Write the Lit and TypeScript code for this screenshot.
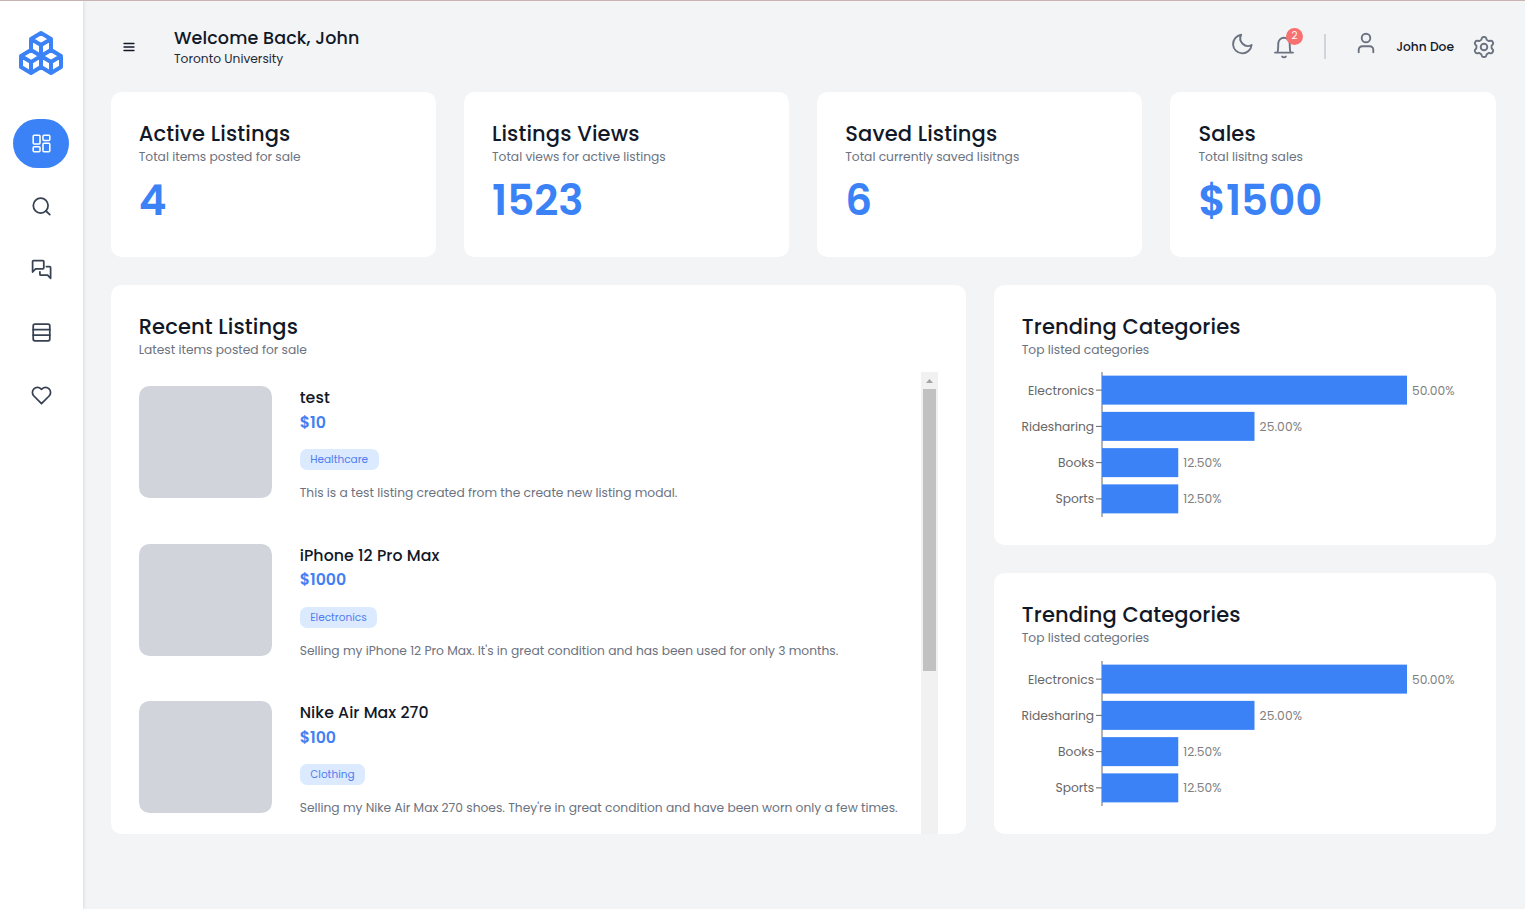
import { LitElement, html, css, svg } from "lit";
import { customElement, property } from "lit/decorators.js";

/* Six-toothed gear outline around (13, 13). */
const GEAR =
  Array.from({ length: 120 }, (_, i) => {
    const a = (i / 120) * Math.PI * 2;
    const r = 8.8 + (1.25 * Math.tanh(1.8 * Math.cos(6 * a))) / Math.tanh(1.8);
    return `${i ? "L" : "M"}${(13 + r * Math.sin(a)).toFixed(2)} ${(13 - r * Math.cos(a)).toFixed(2)}`;
  }).join("") + "z";

const ICONS: Record<string, { box: string; size: number; width: number; body: unknown }> = {
  logo: {
    box: "0 0 24 24", size: 48, width: 2,
    body: svg`<path d="M7 16.5l-5-3l5-3l5 3v5.5l-5 3zM2 13.5v5.5l5 3M7 16.545l5-3.03M17 16.5l-5-3l5-3l5 3v5.5l-5 3zM12 19l5 3M17 16.5l5-3M12 13.5v-5.5l-5-3l5-3l5 3v5.5M7 5.03v5.455M12 8l5-3"/>`,
  },
  dashboard: {
    box: "0 0 21 21", size: 21, width: 1.55,
    body: svg`<rect x="2.2" y="2.2" width="6.8" height="8.8" rx="1"/><rect x="12" y="2.2" width="6.8" height="5.2" rx="1"/><rect x="2.2" y="13.8" width="6.8" height="5" rx="1"/><rect x="12" y="10.2" width="6.8" height="8.6" rx="1"/>`,
  },
  search: {
    box: "0 0 21 21", size: 21, width: 1.75,
    body: svg`<circle cx="9.7" cy="9.6" r="7.4"/><path d="M15 15l3.8 3.6"/>`,
  },
  chat: {
    box: "0 0 21 21", size: 21, width: 1.75,
    body: svg`<path d="M1.6 13V2.6a1 1 0 0 1 1-1h9.2a1 1 0 0 1 1 1v6.2a1 1 0 0 1-1 1H4.6zM15.4 7.5h3.2a1 1 0 0 1 1 1v10.8l-3-3.1H9.9a1 1 0 0 1-1-1v-2.4"/>`,
  },
  table: {
    box: "0 0 21 21", size: 21, width: 1.75,
    body: svg`<rect x="2.2" y="2.2" width="16.6" height="16.6" rx="1.7"/><path d="M2.2 7.7h16.6M2.2 13.2h16.6"/>`,
  },
  heart: {
    box: "0 0 21 21", size: 21, width: 1.75,
    body: svg`<path d="M10.5 18.7L2.9 11a5 5 0 0 1 0-7.1 5 5 0 0 1 7.1 0l.5.5.5-.5a5 5 0 0 1 7.1 7.1z"/>`,
  },
  menu: {
    box: "0 0 14 14", size: 14, width: 1.3,
    body: svg`<path d="M2 3.5h10M2 7h10M2 10.5h10"/>`,
  },
  moon: {
    box: "0 0 24 24", size: 24, width: 1.9,
    body: svg`<path d="M11.2 2.8A9.3 9.3 0 1 0 21.6 13 7.6 7.6 0 0 1 11.2 2.8z"/>`,
  },
  bell: {
    box: "0 0 24 24", size: 24, width: 1.9,
    body: svg`<path d="M3 17.6h18M5.4 17.4C6.4 15 6.1 12 6.3 8.4a5.7 5.7 0 0 1 11.4 0C17.9 12 17.6 15 18.6 17.4M10.2 21.6c.8 1 2.8 1 3.6 0"/>`,
  },
  person: {
    box: "0 0 24 24", size: 24, width: 1.9,
    body: svg`<circle cx="12" cy="7" r="4.3"/><path d="M4.7 21.2v-2.4a3.6 3.6 0 0 1 3.6-3.6h7.4a3.6 3.6 0 0 1 3.6 3.6v2.4"/>`,
  },
  gear: {
    box: "0 0 26 26", size: 26, width: 1.9,
    body: svg`<path d=${GEAR}/><circle cx="13" cy="13" r="3.3"/>`,
  },
};

@customElement("line-icon")
class LineIcon extends LitElement {
  @property() name = "search";
  static styles = css`
    :host { display: block; }
    svg { display: block; fill: none; stroke: currentColor; stroke-linecap: round; stroke-linejoin: round; }
  `;
  render() {
    const i = ICONS[this.name];
    return html`<svg width=${i.size} height=${i.size} viewBox=${i.box} stroke-width=${i.width}>${i.body}</svg>`;
  }
}

@customElement("bar-chart")
class BarChart extends LitElement {
  static styles = css`
    :host { display: block; height: 146px; }
    svg { display: block; overflow: visible; }
    text { font: 400 12.25px Poppins, Inter, sans-serif; fill: #666; letter-spacing: -0.1px; }
    .value { fill: #808080; letter-spacing: -0.3px; }
    .axis { stroke: #666; stroke-width: 1; }
    .bar { fill: #3b82f6; }
  `;
  rows = [
    { name: "Electronics", pct: 50, nw: 66, vw: 42.2 },
    { name: "Ridesharing", pct: 25, nw: 72.5, vw: 42.2 },
    { name: "Books", pct: 12.5, nw: 36, vw: 38 },
    { name: "Sports", pct: 12.5, nw: 38.5, vw: 38 },
  ];
  render() {
    return html`<svg width="446" height="146">
      <path class="axis" d="M80 0v145" />
      ${this.rows.map((r, i) => {
        const y = 18.125 + i * 36.25;
        const base = 23 + i * 36;
        const w = r.pct * 6.1;
        return svg`
          <path class="axis" d="M74 ${y}h6"/>
          <rect class="bar" x="80" y=${y - 14.5} width=${w} height="29"/>
          <text x="72" y=${base} text-anchor="end" textLength=${r.nw}>${r.name}</text>
          <text class="value" x=${85 + w} y=${base} textLength=${r.vw}>${r.pct.toFixed(2)}%</text>`;
      })}
    </svg>`;
  }
}

@customElement("app-root")
class AppRoot extends LitElement {
  static styles = css`
    :host {
      display: flex; box-sizing: border-box; height: 909px; overflow: hidden;
      border-top: 1px solid #c8b4b0; background: #f3f4f6; color: #111827;
      font: 400 12.25px/17.5px Poppins, Inter, sans-serif;
    }
    * { box-sizing: border-box; }
    h1, h2, h3, p { margin: 0; white-space: nowrap; }
    nav {
      width: 83px; flex: none; background: #fff; color: #374151; box-shadow: 1px 0 3px rgba(0,0,0,.1);
      display: flex; flex-direction: column; align-items: center; padding-top: 28px;
    }
    .logo { color: #3b82f6; margin: 0 1px 42px 0; }
    .nav-item { width: 56px; height: 49px; margin: 0 1px 14px 0; border-radius: 24.5px; display: grid; place-items: center; }
    .active { background: #3b82f6; color: #fff; }
    main { flex: 1; min-width: 0; padding: 0 29.3px 0 27.7px; display: flex; flex-direction: column; }
    header { height: 91px; display: flex; align-items: center; color: #6b7280; margin: 0 -1.3px 0 .3px; }
    .menu { color: #111827; margin-left: 11px; }
    .welcome { margin-left: 38px; flex: 1; color: #111827; }
    .welcome h1 { font-size: 17.5px; line-height: 24px; font-weight: 500; letter-spacing: .12px; }
    .welcome p { line-height: 18px; color: #1f2937; }
    .moon { margin: -5px 18px 0 0; }
    .bell { position: relative; margin-right: 28px; }
    .badge {
      position: absolute; left: 14px; top: -7px; width: 17px; height: 17px; border-radius: 50%;
      background: #f87171; color: #fff; font-size: 10.5px; line-height: 16px; text-align: center;
    }
    .divider { width: 2px; height: 25px; background: #d1d5db; margin-right: 28px; }
    .person { margin: -7px 18px 0 0; }
    .user { color: #111827; font-weight: 500; margin-right: 17px; }
    .card { background: #fff; border-radius: 10.5px; padding: 28px; min-width: 0; }
    h2 { font-size: 21px; line-height: 28px; font-weight: 500; letter-spacing: .14px; }
    .sub { color: #6b7280; }
    .stats { display: grid; grid-template-columns: repeat(4, 1fr); gap: 28px; }
    .stats .card { height: 165px; }
    .total { font-size: 42px; line-height: 42px; font-weight: 600; color: #3b82f6; margin-top: 14px; }
    .panels { display: grid; grid-template-columns: 855px 1fr; gap: 28px; margin-top: 28px; height: 549px; }
    .recent { display: flex; flex-direction: column; padding-bottom: 0; }
    .scroller { display: flex; flex: 1; min-height: 0; margin-top: 13px; overflow: hidden; }
    .list { flex: 1; padding-top: 14.7px; display: flex; flex-direction: column; gap: 45.5px; }
    .listing { display: flex; gap: 28px; height: 112px; flex: none; }
    .thumb { width: 133px; height: 112px; border-radius: 10.5px; background: #d1d5db; flex: none; }
    h3 { font-size: 15.75px; line-height: 24.5px; font-weight: 500; letter-spacing: .07px; }
    .price { font-size: 15.75px; line-height: 24.5px; font-weight: 600; color: #437ff3; }
    .tag {
      display: inline-block; background: #dbeafe; color: #4f7df0; border-radius: 7px; height: 21px;
      padding: 0 10.5px; font-size: 10.5px; line-height: 21px; margin: 14px 0;
    }
    .info { display: flex; flex-direction: column; align-items: flex-start; }
    .bar { width: 17px; background: #f1f1f1; display: flex; flex-direction: column; align-items: center; }
    .arrow { height: 17px; padding-top: 2px; display: grid; place-items: center; }
    .thumbbar { width: 13px; height: 282px; background: #c1c1c1; }
    .side { display: flex; flex-direction: column; gap: 28px; }
    .side .card { height: 260px; }
    .side .card + .card { height: 261px; }
    .chart { margin-top: 13px; }
    .card + .card .chart { margin-top: 14px; }
  `;
  stats = [
    ["Active Listings", "Total items posted for sale", "4"],
    ["Listings Views", "Total views for active listings", "1523"],
    ["Saved Listings", "Total currently saved lisitngs", "6"],
    ["Sales", "Total lisitng sales", "$1500"],
  ];
  listings = [
    ["test", "$10", "Healthcare", "This is a test listing created from the create new listing modal."],
    ["iPhone 12 Pro Max", "$1000", "Electronics", "Selling my iPhone 12 Pro Max. It's in great condition and has been used for only 3 months."],
    ["Nike Air Max 270", "$100", "Clothing", "Selling my Nike Air Max 270 shoes. They're in great condition and have been worn only a few times."],
  ];
  render() {
    return html`
      <nav>
        <line-icon class="logo" name="logo"></line-icon>
        ${["dashboard", "search", "chat", "table", "heart"].map(
          (n, i) => html`<div class="nav-item ${i === 0 ? "active" : ""}"><line-icon name=${n}></line-icon></div>`,
        )}
      </nav>
      <main>
        <header>
          <line-icon class="menu" name="menu"></line-icon>
          <div class="welcome"><h1>Welcome Back, John</h1><p>Toronto University</p></div>
          <line-icon class="moon" name="moon"></line-icon>
          <div class="bell"><line-icon name="bell"></line-icon><span class="badge">2</span></div>
          <div class="divider"></div>
          <line-icon class="person" name="person"></line-icon>
          <span class="user">John Doe</span>
          <line-icon name="gear"></line-icon>
        </header>
        <section class="stats">
          ${this.stats.map(([t, s, n]) => html`<div class="card"><h2>${t}</h2><p class="sub">${s}</p><p class="total">${n}</p></div>`)}
        </section>
        <section class="panels">
          <div class="card recent">
            <h2>Recent Listings</h2><p class="sub">Latest items posted for sale</p>
            <div class="scroller">
              <div class="list">
                ${this.listings.map(([t, p, c, d]) => html`<div class="listing">
                  <div class="thumb"></div>
                  <div class="info"><h3>${t}</h3><p class="price">${p}</p><span class="tag">${c}</span><p class="sub">${d}</p></div>
                </div>`)}
              </div>
              <div class="bar">
                <div class="arrow"><svg width="7" height="4"><path d="M0 4L3.5 0L7 4z" fill="#a3a3a3" /></svg></div>
                <div class="thumbbar"></div>
              </div>
            </div>
          </div>
          <div class="side">
            ${[0, 1].map(() => html`<div class="card"><h2>Trending Categories</h2><p class="sub">Top listed categories</p><bar-chart class="chart"></bar-chart></div>`)}
          </div>
        </section>
      </main>`;
  }
}
